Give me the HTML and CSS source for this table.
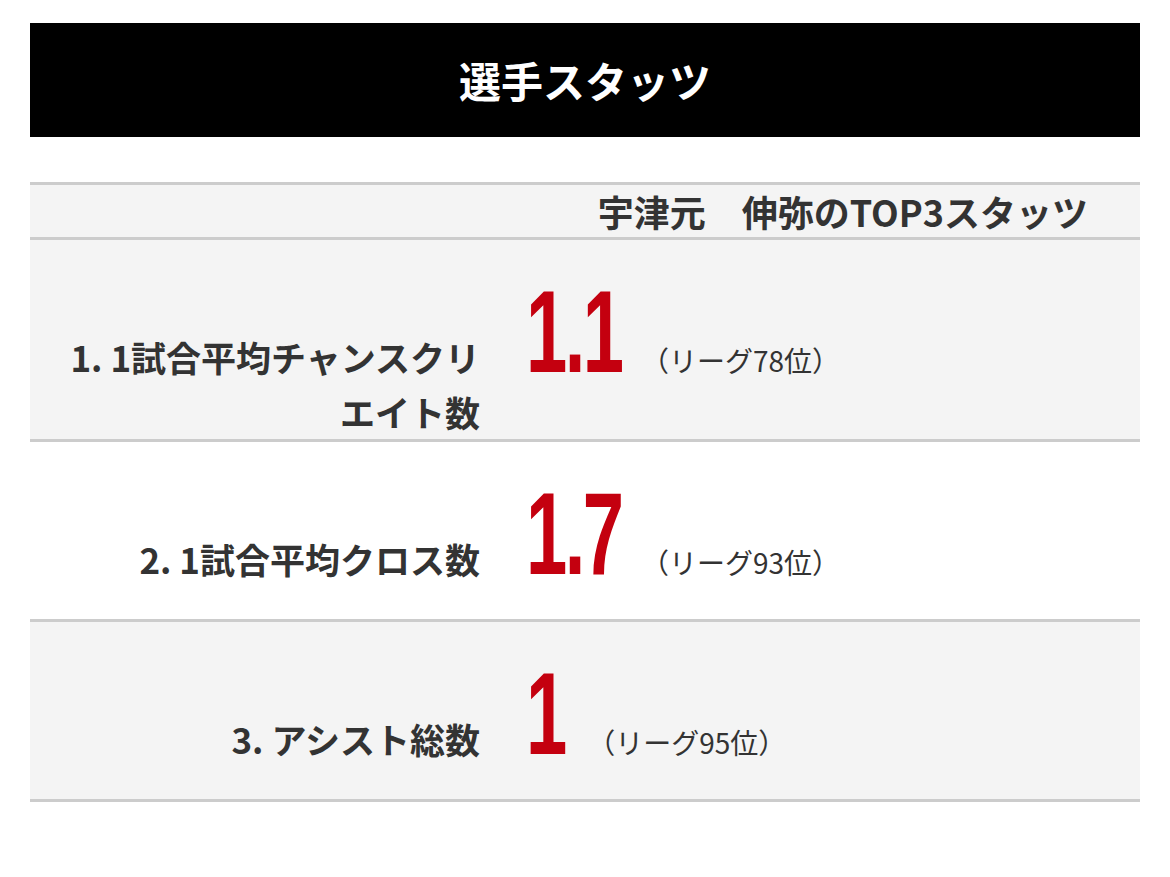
FILE: index.html
```html
<!DOCTYPE html>
<html lang="ja">
<head>
<meta charset="utf-8">
<title>選手スタッツ</title>
<link rel="stylesheet" href="styles.css">
</head>
<body>
<div class="page">
  <h2 class="title">選手スタッツ</h2>
  <div class="stats">
    <div class="stats-head">宇津元　伸弥のTOP3スタッツ</div>
    <div class="stat-row alt">
      <div class="stat-label">1. 1試合平均チャンスクリエイト数</div>
      <div class="stat-value"><span class="num" style="--w:2.5">1.1</span><span class="rank">（リーグ78位）</span></div>
    </div>
    <div class="stat-row">
      <div class="stat-label">2. 1試合平均クロス数</div>
      <div class="stat-value"><span class="num" style="--w:2.5">1.7</span><span class="rank">（リーグ93位）</span></div>
    </div>
    <div class="stat-row alt last">
      <div class="stat-label">3. アシスト総数</div>
      <div class="stat-value"><span class="num" style="--w:1">1</span><span class="rank">（リーグ95位）</span></div>
    </div>
  </div>
</div>
</body>
</html>
```
FILE: styles.css
```css
html, body {
  margin: 0;
  padding: 0;
  background: #fff;
}
body {
  font-family: "Noto Sans CJK JP", "Noto Sans", sans-serif;
  color: #333;
}
.page {
  padding: 23px 30px;
}
.title {
  margin: 0;
  background: #000;
  color: #fff;
  height: 114px;
  line-height: 114px;
  text-align: center;
  font-size: 42px;
  font-weight: 700;
}
.stats {
  margin-top: 45px;
  border-top: 3px solid #cccccc;
}
.stats-head {
  background: #f4f4f4;
  height: 52px;
  line-height: 52px;
  font-size: 36px;
  font-weight: 700;
  text-align: right;
  padding-right: 52px;
  color: #333;
}
.stat-row {
  display: flex;
  align-items: baseline;
  border-top: 3px solid #cccccc;
  background: #fff;
  padding-top: 7px;
}
.stat-row.last {
  border-bottom: 3px solid #cccccc;
}
.stat-row.alt {
  background: #f4f4f4;
}
.stat-label {
  width: 460px;
  flex: none;
  box-sizing: border-box;
  padding: 0 10px 0 20px;
  text-align: right;
  font-size: 35px;
  line-height: 55px;
  font-weight: 700;
  color: #333;
}
.stat-value {
  display: flex;
  align-items: baseline;
  padding-left: 36px;
}
.num {
  display: inline-block;
  font-family: "Liberation Sans", "Arial", sans-serif;
  font-weight: 700;
  font-size: 116px;
  line-height: 170px;
  color: #c4000f;
  letter-spacing: -0.035em;
  transform: scaleX(0.64);
  transform-origin: 0 50%;
  margin-right: calc(var(--w) * -0.36ch);
}
.rank {
  font-size: 28px;
  color: #333;
  margin-left: 24px;
}
```
